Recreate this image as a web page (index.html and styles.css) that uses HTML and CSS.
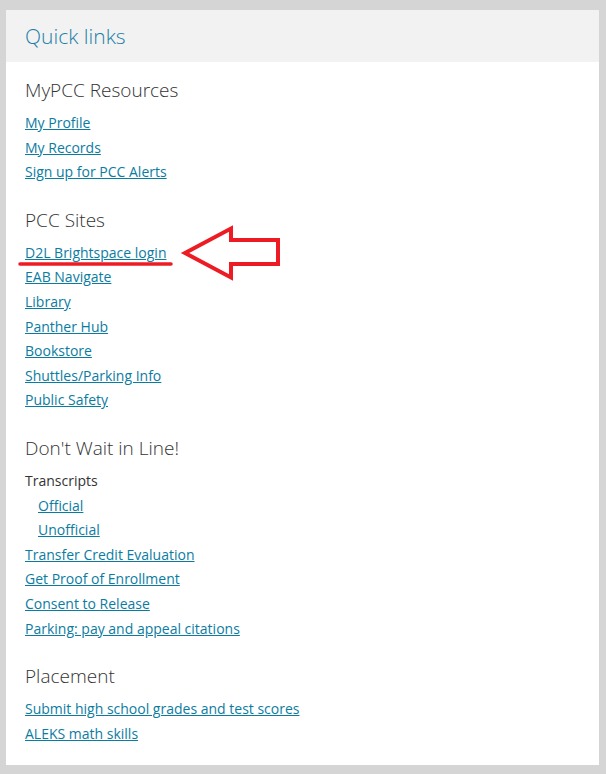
FILE: index.html
```html
<!DOCTYPE html>
<html lang="en">
<head>
<meta charset="utf-8">
<title>Quick links</title>
<link rel="stylesheet" href="styles.css">
</head>
<body>
<div class="panel">
  <div class="panel-header"><h2 class="panel-title">Quick links</h2></div>
  <div class="panel-body">
    <section class="group">
      <h3 class="group-title">MyPCC Resources</h3>
      <ul class="links">
        <li><a href="#">My Profile</a></li>
        <li><a href="#">My Records</a></li>
        <li><a href="#">Sign up for PCC Alerts</a></li>
      </ul>
    </section>
    <section class="group">
      <h3 class="group-title">PCC Sites</h3>
      <ul class="links">
        <li><a href="#">D2L Brightspace login</a></li>
        <li><a href="#">EAB Navigate</a></li>
        <li><a href="#">Library</a></li>
        <li><a href="#">Panther Hub</a></li>
        <li><a href="#">Bookstore</a></li>
        <li><a href="#">Shuttles/Parking Info</a></li>
        <li><a href="#">Public Safety</a></li>
      </ul>
    </section>
    <section class="group">
      <h3 class="group-title">Don't Wait in Line!</h3>
      <ul class="links">
        <li class="label">Transcripts
          <ul class="links sub">
            <li><a href="#">Official</a></li>
            <li><a href="#">Unofficial</a></li>
          </ul>
        </li>
        <li><a href="#">Transfer Credit Evaluation</a></li>
        <li><a href="#">Get Proof of Enrollment</a></li>
        <li><a href="#">Consent to Release</a></li>
        <li><a href="#">Parking: pay and appeal citations</a></li>
      </ul>
    </section>
    <section class="group">
      <h3 class="group-title">Placement</h3>
      <ul class="links">
        <li><a href="#">Submit high school grades and test scores</a></li>
        <li><a href="#">ALEKS math skills</a></li>
      </ul>
    </section>
  </div>
</div>
<svg class="annotation" width="606" height="774" viewBox="0 0 606 774" aria-hidden="true">
  <line x1="20" y1="264" x2="171" y2="264" stroke="#ed1c24" stroke-width="3.5" stroke-linecap="round"/>
  <polygon points="185,253 231,228.5 231,240 278,240 278,264 231,264 231,277.5" fill="none" stroke="#ed1c24" stroke-width="4" stroke-linejoin="miter"/>
</svg>
</body>
</html>
```
FILE: styles.css
```css
html, body {
  margin: 0;
  padding: 0;
}
body {
  background: #d5d5d5;
  font-family: "Open Sans", "Noto Sans", sans-serif;
  position: relative;
  width: 606px;
  height: 774px;
  overflow: hidden;
}
.panel {
  margin: 10px 7px 0 6px;
  background: #ffffff;
}
.panel-header {
  background: #f2f2f2;
  height: 52px;
  padding: 0 19px;
  box-sizing: border-box;
}
.panel-title {
  margin: 0;
  font-size: 21px;
  font-weight: 300;
  line-height: 52px;
  color: #1c80a6;
}
.panel-body {
  padding: 15px 19px 19px;
}
.group + .group {
  margin-top: 22px;
}
.group-title {
  margin: 0 0 8px;
  font-size: 19px;
  font-weight: 300;
  line-height: 26px;
  color: #333333;
}
.links {
  list-style: none;
  margin: 0;
  padding: 0;
  font-size: 14px;
  line-height: 24.6px;
}
.links a {
  color: #0b7ca1;
  text-decoration: underline;
}
.label {
  color: #333333;
}
.sub {
  padding-left: 13px;
}
.annotation {
  position: absolute;
  top: 0;
  left: 0;
  pointer-events: none;
}
```
